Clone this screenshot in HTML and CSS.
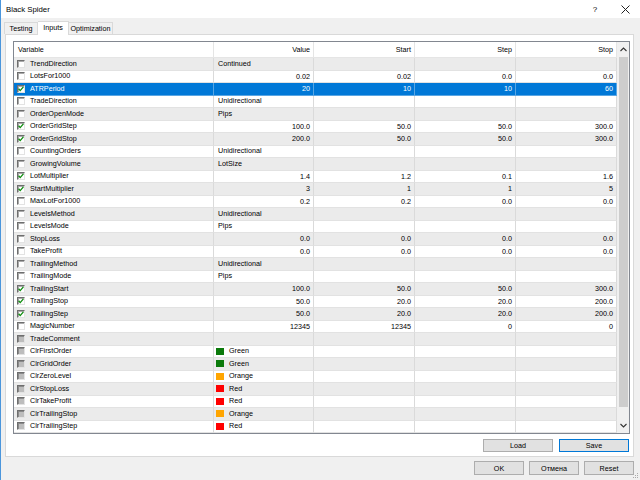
FILE: index.html
```html
<!DOCTYPE html>
<html lang="en">
<head>
    <meta charset="UTF-8">
    <title>Black Spider</title>
    <link rel="stylesheet" href="styles.css">
</head>
<body>
    <div class="window">
        <div class="titlebar">
            <span class="title">Black Spider</span>
            <span class="caption-btn">?</span>
            <span class="caption-btn">
                <svg width="9" height="9" viewBox="0 0 9 9"><path d="M0.5 0.5 L8.5 8.5 M8.5 0.5 L0.5 8.5" stroke="#222" stroke-width="1"/></svg>
            </span>
        </div>

        <div class="tabs">
            <div class="tab">Testing</div>
            <div class="tab active">Inputs</div>
            <div class="tab">Optimization</div>
        </div>

        <div class="panel">
            <div class="grid">
                <div class="table">
                    <div class="row head">
                        <div class="cell var">Variable</div>
                        <div class="cell num">Value</div>
                        <div class="cell num">Start</div>
                        <div class="cell num">Step</div>
                        <div class="cell num">Stop</div>
                    </div>
                    <div class="rows" id="rows">
                        <!-- rows are built by the script below -->
                    </div>
                </div>
                <div class="scrollbar">
                    <div class="arrow">
                        <svg width="7" height="5" viewBox="0 0 7 5"><path d="M0.5 4 L3.5 1 L6.5 4" fill="none" stroke="#333" stroke-width="1.1"/></svg>
                    </div>
                    <div class="thumb"></div>
                    <div class="track"></div>
                    <div class="arrow down">
                        <svg width="7" height="5" viewBox="0 0 7 5"><path d="M0.5 1 L3.5 4 L6.5 1" fill="none" stroke="#333" stroke-width="1.1"/></svg>
                    </div>
                </div>
            </div>
            <div class="actions">
                <button class="btn wide">Load</button>
                <button class="btn wide default">Save</button>
            </div>
        </div>

        <div class="footer">
            <button class="btn">OK</button>
            <button class="btn">Отмена</button>
            <button class="btn">Reset</button>
        </div>

        <svg class="grip" width="6" height="6" viewBox="0 0 6 6">
            <rect x="4" y="0" width="1" height="1" fill="#aaa"/>
            <rect x="2" y="2" width="1" height="1" fill="#aaa"/>
            <rect x="4" y="2" width="1" height="1" fill="#aaa"/>
            <rect x="0" y="4" width="1" height="1" fill="#aaa"/>
            <rect x="2" y="4" width="1" height="1" fill="#aaa"/>
            <rect x="4" y="4" width="1" height="1" fill="#aaa"/>
        </svg>
    </div>

    <script>
        // name, estado (0 = vacio, 1 = marcado, 2 = desactivado), value, start, step, stop
        const params = [
            ['TrendDirection', 0, 'Continued'],
            ['LotsFor1000', 0, '0.02', '0.02', '0.0', '0.0'],
            ['ATRPeriod', 1, '20', '10', '10', '60'],
            ['TradeDirection', 0, 'Unidirectional'],
            ['OrderOpenMode', 0, 'Pips'],
            ['OrderGridStep', 1, '100.0', '50.0', '50.0', '300.0'],
            ['OrderGridStop', 1, '200.0', '50.0', '50.0', '300.0'],
            ['CountingOrders', 0, 'Unidirectional'],
            ['GrowingVolume', 0, 'LotSize'],
            ['LotMultiplier', 1, '1.4', '1.2', '0.1', '1.6'],
            ['StartMultiplier', 1, '3', '1', '1', '5'],
            ['MaxLotFor1000', 0, '0.2', '0.2', '0.0', '0.0'],
            ['LevelsMethod', 0, 'Unidirectional'],
            ['LevelsMode', 0, 'Pips'],
            ['StopLoss', 0, '0.0', '0.0', '0.0', '0.0'],
            ['TakeProfit', 0, '0.0', '0.0', '0.0', '0.0'],
            ['TrailingMethod', 0, 'Unidirectional'],
            ['TrailingMode', 0, 'Pips'],
            ['TrailingStart', 1, '100.0', '50.0', '50.0', '300.0'],
            ['TrailingStop', 1, '50.0', '20.0', '20.0', '200.0'],
            ['TrailingStep', 1, '50.0', '20.0', '20.0', '200.0'],
            ['MagicNumber', 0, '12345', '12345', '0', '0'],
            ['TradeComment', 2, ''],
            ['ClrFirstOrder', 2, 'Green', null, null, null, '#0b7a0b'],
            ['ClrGridOrder', 2, 'Green', null, null, null, '#0b7a0b'],
            ['ClrZeroLevel', 2, 'Orange', null, null, null, '#ffa500'],
            ['ClrStopLoss', 2, 'Red', null, null, null, '#ff0000'],
            ['ClrTakeProfit', 2, 'Red', null, null, null, '#ff0000'],
            ['ClrTrailingStop', 2, 'Orange', null, null, null, '#ffa500'],
            ['ClrTrailingStep', 2, 'Red', null, null, null, '#ff0000']
        ];

        const checkMark = '<svg width="6" height="6" viewBox="0 0 6 6"><path d="M0.6 2.8 L2.2 4.6 L5.4 0.8" fill="none" stroke="#0a8c0a" stroke-width="1.3"/></svg>';
        const rows = document.getElementById('rows');

        params.forEach((p, index) => {
            const [name, state, value, start, step, stop, color] = p;
            const row = document.createElement('div');
            row.className = 'row' + (index === 2 ? ' selected' : '');

            let box = '<span class="check">' + (state === 1 ? checkMark : '') + '</span>';
            if (state === 2) box = '<span class="check disabled"></span>';

            let cells = `<div class="cell var">${box}${name}</div>`;
            if (start === undefined || start === null) {
                const swatch = color ? `<span class="swatch" style="background:${color}"></span>` : '';
                cells += `<div class="cell text">${swatch}${value}</div>`;
                cells += '<div class="cell"></div><div class="cell"></div><div class="cell"></div>';
            } else {
                cells += `<div class="cell num">${value}</div>`;
                cells += `<div class="cell num">${start}</div>`;
                cells += `<div class="cell num">${step}</div>`;
                cells += `<div class="cell num">${stop}</div>`;
            }
            row.innerHTML = cells;
            rows.appendChild(row);
        });
    </script>
</body>
</html>
```

FILE: styles.css
```css
body {
    margin: 0;
    font-family: "Liberation Sans", Arial, sans-serif;
    font-size: 7.2px;
    color: #000;
    background: #f0f0f0;
}
.window {
    width: 640px;
    height: 480px;
    box-sizing: border-box;
    border-left: 1px solid #4b96dc;
    background: #f0f0f0;
    position: relative;
    overflow: hidden;
}
.titlebar {
    height: 18px;
    background: #fff;
    display: flex;
    align-items: center;
    padding-left: 5px;
    font-size: 7.8px;
}
.title {
    flex: 1;
}
.caption-btn {
    width: 30px;
    height: 18px;
    display: flex;
    align-items: center;
    justify-content: center;
    font-size: 8px;
}
.tabs {
    height: 16px;
    display: flex;
    align-items: flex-end;
    padding-left: 3px;
}
.tab {
    height: 11px;
    line-height: 11px;
    border: 1px solid #d9d9d9;
    border-bottom: none;
    background: #f0f0f0;
    text-align: center;
    box-sizing: content-box;
}
.tab:nth-child(1) {
    width: 32px;
}
.tab:nth-child(2) {
    width: 30px;
}
.tab:nth-child(3) {
    width: 43px;
    border-left: none;
}
.tab.active {
    height: 13px;
    background: #fff;
    margin-bottom: -1px;
    position: relative;
    border-left: none;
}
.panel {
    width: 629px;
    height: 423px;
    margin-left: 4px;
    box-sizing: border-box;
    border: 1px solid #d9d9d9;
    background: #fff;
    padding: 6px 3px 0 7px;
}
.grid {
    width: 617px;
    box-sizing: border-box;
    border: 1px solid #828790;
    display: flex;
}
.table {
    width: 603px;
}
.row {
    display: grid;
    grid-template-columns: 200px 100px 101px 101px 101px;
    height: 12.5px;
    line-height: 12px;
}
.rows .row:nth-child(odd) {
    background: #ebebeb;
}
.cell {
    box-sizing: border-box;
    border-right: 1px solid #dadada;
    border-bottom: 1px solid #e2e2e2;
    padding: 0 3px;
    white-space: nowrap;
    overflow: hidden;
}
.cell.num {
    text-align: right;
}
.cell.var {
    display: flex;
    align-items: center;
    padding-left: 3px;
}
.cell.text {
    display: flex;
    align-items: center;
    padding-left: 4px;
}
.row.head {
    height: 16px;
    line-height: 15px;
    background: #fff;
}
.row.head .cell {
    border-bottom: 1px solid #e5e5e5;
    border-right-color: #e5e5e5;
}
.row.head .cell.var {
    padding-left: 4px;
}
.rows .row.selected {
    background: #0078d7;
    color: #fff;
}
.row.selected .cell {
    border-color: #5aa6e3;
}
.check {
    width: 8px;
    height: 8px;
    box-sizing: border-box;
    border: 1px solid;
    border-color: #6e6e6e #e3e3e3 #e3e3e3 #6e6e6e;
    box-shadow: inset 1px 1px 0 #a9a9a9;
    background: #fff;
    margin-right: 5px;
    display: flex;
    align-items: center;
    justify-content: center;
    flex-shrink: 0;
}
.check.disabled {
    background: #bdbdbd;
    box-shadow: inset 1px 1px 0 #8a8a8a;
}
.swatch {
    width: 8px;
    height: 7px;
    margin-left: -2px;
    margin-right: 5px;
    flex-shrink: 0;
}
.scrollbar {
    width: 12px;
    background: #f0f0f0;
    display: flex;
    flex-direction: column;
}
.arrow {
    height: 15px;
    display: flex;
    align-items: center;
    justify-content: center;
}
.arrow.down {
    height: 16px;
}
.thumb {
    width: 9px;
    height: 350px;
    margin: 0 auto;
    background: #cdcdcd;
}
.track {
    flex: 1;
}
.actions {
    display: flex;
    justify-content: flex-end;
    gap: 6px;
    margin-top: 5px;
    padding-right: 1px;
}
.btn {
    width: 50px;
    height: 14px;
    padding: 0;
    font-family: inherit;
    font-size: 7.2px;
    color: #000;
    background: #e1e1e1;
    border: 1px solid #adadad;
    box-sizing: border-box;
}
.btn.wide {
    width: 70px;
    height: 13px;
}
.btn.default {
    border-color: #0078d7;
}
.footer {
    display: flex;
    justify-content: flex-end;
    gap: 5px;
    padding: 4px 6px 0 0;
}
.grip {
    position: absolute;
    right: 1px;
    bottom: 1px;
}
```
